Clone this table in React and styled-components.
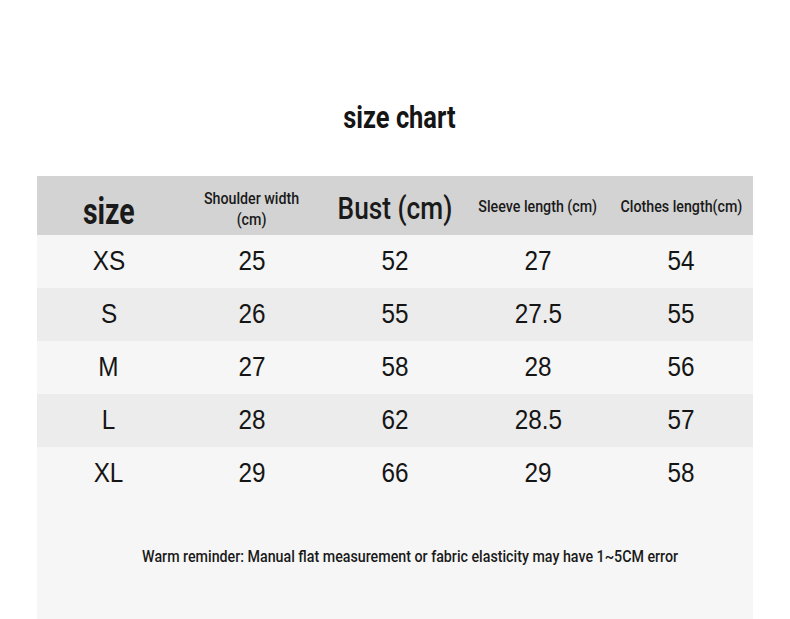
import React from "react";
import styled, { createGlobalStyle } from "styled-components";

const GlobalStyle = createGlobalStyle`
  html, body {
    margin: 0;
    padding: 0;
    background: #ffffff;
  }
  body {
    font-family: "Liberation Sans", Arial, sans-serif;
    color: #111;
  }
`;

const condensed = `"Roboto", "DejaVu Sans Condensed", sans-serif`;

const rows = [
  ["XS", "25", "52", "27", "54"],
  ["S", "26", "55", "27.5", "55"],
  ["M", "27", "58", "28", "56"],
  ["L", "28", "62", "28.5", "57"],
  ["XL", "29", "66", "29", "58"],
];

const App = () => {
  return (
    <Page>
      <GlobalStyle />
      <Title>
        <Squeeze>size chart</Squeeze>
      </Title>
      <Chart>
        <HeadRow>
          <HeadCell size="36px" weight="700" shift="13px">
            <Squeeze x={0.79}>size</Squeeze>
          </HeadCell>
          <HeadCell size="16px" weight="500" lh="21px" shift="6px">
            <Squeeze x={0.89}>
              Shoulder width
              <br />
              (cm)
            </Squeeze>
          </HeadCell>
          <HeadCell size="32px" weight="500" shift="4px">
            <Squeeze>Bust (cm)</Squeeze>
          </HeadCell>
          <HeadCell size="16px" weight="500" shift="1px">
            <Squeeze x={0.89}>Sleeve length (cm)</Squeeze>
          </HeadCell>
          <HeadCell size="16px" weight="500" shift="1px">
            <Squeeze x={0.89}>Clothes length(cm)</Squeeze>
          </HeadCell>
        </HeadRow>
        {rows.map((r, i) => (
          <Row key={r[0]} alt={i % 2 === 1}>
            {r.map((v, j) => (
              <Cell key={j}>
                <Squeeze x={0.9}>{v}</Squeeze>
              </Cell>
            ))}
          </Row>
        ))}
        <Footer>
          <Squeeze x={0.89}>
            Warm reminder: Manual flat measurement or fabric elasticity may have 1~5CM error
          </Squeeze>
        </Footer>
      </Chart>
    </Page>
  );
};

export default App;

const Page = styled.div`
  width: 790px;
  height: 619px;
  overflow: hidden;
  display: flex;
  flex-direction: column;
  padding-top: 98px;
  box-sizing: border-box;
`;

const Squeeze = styled.span`
  display: inline-block;
  transform: scaleX(${(p) => p.x || 0.82});
  white-space: nowrap;
`;

const Title = styled.h1`
  margin: 0;
  width: 716px;
  margin-left: 41px;
  text-align: center;
  font-family: ${condensed};
  font-weight: 700;
  font-size: 31px;
  line-height: 40px;
  height: 78px;
  color: #151515;
`;

const Chart = styled.div`
  width: 716px;
  margin-left: 37px;
  flex: 1;
  background: #f6f6f6;
  display: flex;
  flex-direction: column;
`;

const HeadRow = styled.div`
  display: grid;
  grid-template-columns: repeat(5, 1fr);
  height: 59px;
  background: #d3d3d3;
`;

const HeadCell = styled.div`
  display: flex;
  align-items: center;
  justify-content: center;
  text-align: center;
  font-family: ${condensed};
  font-size: ${(p) => p.size};
  font-weight: ${(p) => p.weight};
  line-height: ${(p) => p.lh || "normal"};
  color: #1a1a1a;
  padding-top: ${(p) => p.shift || "0"};
  white-space: nowrap;
`;

const Row = styled.div`
  display: grid;
  grid-template-columns: repeat(5, 1fr);
  height: 53px;
  background: ${(p) => (p.alt ? "#ececec" : "#f6f6f6")};
`;

const Cell = styled.div`
  display: flex;
  align-items: center;
  justify-content: center;
  font-family: "Liberation Sans", Arial, sans-serif;
  font-size: 27px;
  color: #151515;
`;

const Footer = styled.div`
  flex: 1;
  display: flex;
  align-items: center;
  justify-content: center;
  padding-left: 30px;
  padding-bottom: 6px;
  font-family: ${condensed};
  font-weight: 500;
  font-size: 16px;
  color: #1a1a1a;
`;
